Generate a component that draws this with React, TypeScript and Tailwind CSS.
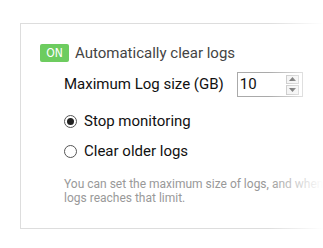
import React from "react";

function Radio({ checked, label }: { checked: boolean; label: string }) {
  return (
    <label className="flex h-[20px] items-center gap-[7px]">
      <span className="flex size-[13px] items-center justify-center rounded-full border border-[#555] bg-white">
        {checked && <span className="size-[7px] rounded-full bg-[#222]" />}
      </span>
      <span className="text-[15px] text-[#111]">{label}</span>
    </label>
  );
}

function Spinner() {
  return (
    <div className="flex h-[20px] w-[13px] flex-col gap-px">
      <div className="flex h-[10px] items-center justify-center border border-[#b5b5b5] bg-[#eee]">
        <svg width="7" height="4" viewBox="0 0 7 4">
          <path d="M0 4 L3.5 0 L7 4 Z" fill="#222" />
        </svg>
      </div>
      <div className="flex h-[10px] items-center justify-center border border-[#b5b5b5] bg-[#eee]">
        <svg width="7" height="4" viewBox="0 0 7 4">
          <path d="M0 0 L3.5 4 L7 0 Z" fill="#222" />
        </svg>
      </div>
    </div>
  );
}

export default function App() {
  return (
    <div className="relative h-[248px] w-[323px] overflow-hidden bg-white pl-[20px] pt-[23px] font-[Roboto,sans-serif]">
      <div className="h-[206px] w-[340px] border border-[#ddd] pl-[19px] pt-[20px]">
        <div className="flex h-[18px] items-center gap-[6px]">
          <span className="flex h-[18px] w-[29px] items-center justify-center rounded-[2px] bg-[#6dcc5f] text-[12px] text-white [font-family:'DejaVu_Sans_Condensed',sans-serif]">
            ON
          </span>
          <span className="text-[15px] text-[#444]">Automatically clear logs</span>
        </div>

        <div className="ml-[24px] mt-[10px] flex items-center gap-[13px]">
          <span className="text-[15px] text-[#111]">Maximum Log size (GB)</span>
          <div className="flex h-[25px] w-[66px] items-center justify-between border border-[#aaa] bg-white pl-[2px] pr-[3px]">
            <span className="self-start pt-[4px] text-[15px] leading-none text-[#111]">10</span>
            <Spinner />
          </div>
        </div>

        <div className="ml-[24px] mt-[14px] flex flex-col gap-[10px]">
          <Radio checked label="Stop monitoring" />
          <Radio checked={false} label="Clear older logs" />
        </div>

        <p className="ml-[24px] mt-[16px] whitespace-nowrap text-[12px] leading-[14px] text-[#999]">
          You can set the maximum size of logs, and when the size of
          <br />
          logs reaches that limit.
        </p>
      </div>
      <div className="pointer-events-none absolute right-0 top-0 h-full w-[55px] bg-gradient-to-r from-transparent to-white" />
    </div>
  );
}
